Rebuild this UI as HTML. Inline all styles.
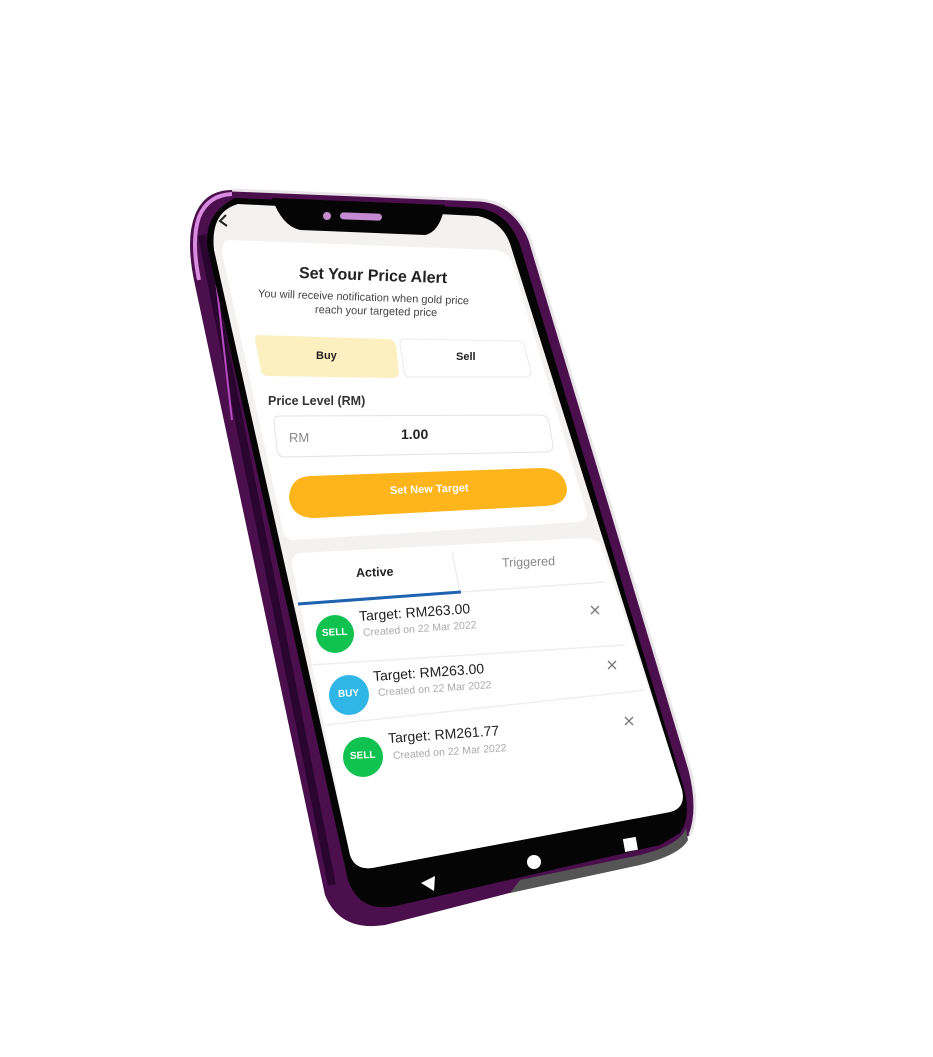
<!DOCTYPE html>
<html><head><meta charset="utf-8"><style>
body{margin:0;width:933px;height:1057px;background:#fff;position:relative;overflow:hidden;font-family:"Liberation Sans",sans-serif}
.t{position:absolute;white-space:nowrap;transform-origin:left center}
</style></head><body>
<svg width="933" height="1057" style="position:absolute;left:0;top:0">
 <path d="M232,190 L480,200 Q515,203 530,240 L690,770 Q700,810 690,835 L665,848 Q640,860 560,880 L385,925 Q340,932 325,895 L195,285 Q185,240 195,215 Q205,190 232,190 Z" fill="#4a0f4c"/>
 <path d="M232,190 L480,200 Q515,203 530,240 L690,770 Q700,810 690,835" fill="none" stroke="#e9e5e9" stroke-width="3"/>
 <path d="M199,280 Q191,240 199,217 Q208,195 232,194" fill="none" stroke="#d98be0" stroke-width="4"/>
 <path d="M202,235 L332,885" stroke="#2a0530" stroke-width="8"/>
 <path d="M212,245 L232,420" stroke="#b44bc0" stroke-width="2"/>
 <path d="M235,198 L478,208 Q508,212 520,245 L683,785 Q692,815 680,833 L660,845 L400,905 Q360,915 348,880 L208,250 Q202,215 235,198 Z" fill="#050505"/>
 <path d="M520,880 L640,855 Q680,845 686,828 L688,840 Q680,855 640,865 L510,893 Z" fill="#555"/>
 <path d="M238,204 L478,216 Q505,222 512,250 L682,790 Q686,808 670,812 L372,868 Q355,870 350,855 L214,250 Q210,212 238,204 Z" fill="#f3f2f0"/>
 <path d="M272,198 L445,205 Q440,232 425,235 L300,230 Q282,226 272,198 Z" fill="#050505"/>
 <circle cx="327" cy="216" r="4" fill="#c48ad0"/>
 <rect x="340" y="213" width="42" height="7" rx="3.5" fill="#c48ad0" transform="rotate(2 360 216)"/>
 <path d="M230,240 L495,250 Q508,252 512,262 L586,510 Q590,520 578,522 L295,540 Q285,541 283,530 L222,253 Q222,240 230,240 Z" fill="#fff"/>
 <path d="M300,553 L585,538 Q598,538 602,548 L682,790 Q686,808 670,812 L372,868 Q355,870 350,855 L292,565 Q292,554 300,553 Z" fill="#fff"/>
 <path d="M258,335 L388,339 Q394,339 396,346 L399,372 Q399,378 392,378 L268,376 Q262,376 261,370 L255,340 Q255,335 258,335 Z" fill="#fdf0c0"/>
 <path d="M403,339 L518,341 Q524,341 525,348 L531,372 Q531,377 524,377 L410,377 Q405,377 404,371 L400,344 Q400,339 403,339 Z" fill="#fff" stroke="#ebebeb"/>
 <path d="M279,416 L540,415 Q548,415 549,423 L553,445 Q553,452 545,452 L285,457 Q278,457 277,450 L274,422 Q274,416 279,416 Z" fill="#fff" stroke="#e3e3e3"/>
 <path d="M310,476 L540,468 Q565,468 567,490 Q566,505 545,506 L315,518 Q292,518 289,498 Q290,477 310,476 Z" fill="#fdb51b"/>
 <path d="M452,551 L460,593" stroke="#eee" stroke-width="1.5"/>
 <path d="M298,604 L461,592" stroke="#1e63b0" stroke-width="3"/>
 <path d="M461,592 L605,582" stroke="#eee" stroke-width="1.5"/>
 <path d="M310,665 L625,645" stroke="#efefef" stroke-width="1.5"/>
 <path d="M325,725 L645,690" stroke="#efefef" stroke-width="1.5"/>
 <circle cx="335" cy="634" r="19" fill="#10c24f"/>
 <circle cx="349" cy="695" r="20" fill="#2fb5e6"/>
 <circle cx="363" cy="757" r="20" fill="#10c24f"/>
 <g stroke="#777" stroke-width="1.3">
  <path d="M591,606 L599,614 M599,606 L591,614"/>
  <path d="M608,661 L616,669 M616,661 L608,669"/>
  <path d="M625,717 L633,725 M633,717 L625,725"/>
 </g>
 <path d="M226,215 L220,221 L227,226" fill="none" stroke="#222" stroke-width="2"/>
 <path d="M421,883 L435,876 L434,891 Z" fill="#fff"/>
 <circle cx="534" cy="862" r="7" fill="#fff"/>
 <rect x="624" y="838" width="13" height="13" fill="#fff" transform="rotate(-10 630 845)"/>
</svg>
<div class="t" style="left:299px;top:265px;font-size:16px;font-weight:bold;color:#222;transform:rotate(2deg)">Set Your Price Alert</div>
<div class="t" style="left:258px;top:288px;font-size:11px;color:#444;transform:rotate(2deg)">You will receive notification when gold price</div>
<div class="t" style="left:315px;top:304px;font-size:11px;color:#444;transform:rotate(1.5deg)">reach your targeted price</div>
<div class="t" style="left:316px;top:350px;font-size:11px;font-weight:bold;color:#222">Buy</div>
<div class="t" style="left:456px;top:351px;font-size:11px;font-weight:bold;color:#222">Sell</div>
<div class="t" style="left:268px;top:394px;font-size:12.5px;font-weight:bold;color:#333">Price Level (RM)</div>
<div class="t" style="left:289px;top:430px;font-size:13px;color:#888">RM</div>
<div class="t" style="left:401px;top:426px;font-size:14px;font-weight:bold;color:#222">1.00</div>
<div class="t" style="left:390px;top:485px;font-size:11px;font-weight:bold;color:#fff;transform:rotate(-2deg)">Set New Target</div>
<div class="t" style="left:356px;top:566px;font-size:12.5px;font-weight:bold;color:#222;transform:rotate(-2deg)">Active</div>
<div class="t" style="left:502px;top:556px;font-size:12.5px;color:#888;transform:rotate(-2deg)">Triggered</div>
<div class="t" style="left:322px;top:628px;font-size:10px;font-weight:bold;color:#fff;transform:rotate(-3deg)">SELL</div>
<div class="t" style="left:338px;top:689px;font-size:10px;font-weight:bold;color:#fff;transform:rotate(-3deg)">BUY</div>
<div class="t" style="left:350px;top:751px;font-size:10px;font-weight:bold;color:#fff;transform:rotate(-3deg)">SELL</div>
<div class="t" style="left:359px;top:608px;font-size:14px;color:#222;transform:rotate(-4deg)">Target: RM263.00</div>
<div class="t" style="left:363px;top:627px;font-size:10.5px;color:#aaa;transform:rotate(-4deg)">Created on 22 Mar 2022</div>
<div class="t" style="left:373px;top:668px;font-size:14px;color:#222;transform:rotate(-4deg)">Target: RM263.00</div>
<div class="t" style="left:378px;top:687px;font-size:10.5px;color:#aaa;transform:rotate(-4deg)">Created on 22 Mar 2022</div>
<div class="t" style="left:388px;top:730px;font-size:14px;color:#222;transform:rotate(-4deg)">Target: RM261.77</div>
<div class="t" style="left:393px;top:750px;font-size:10.5px;color:#aaa;transform:rotate(-4deg)">Created on 22 Mar 2022</div>
</body></html>
